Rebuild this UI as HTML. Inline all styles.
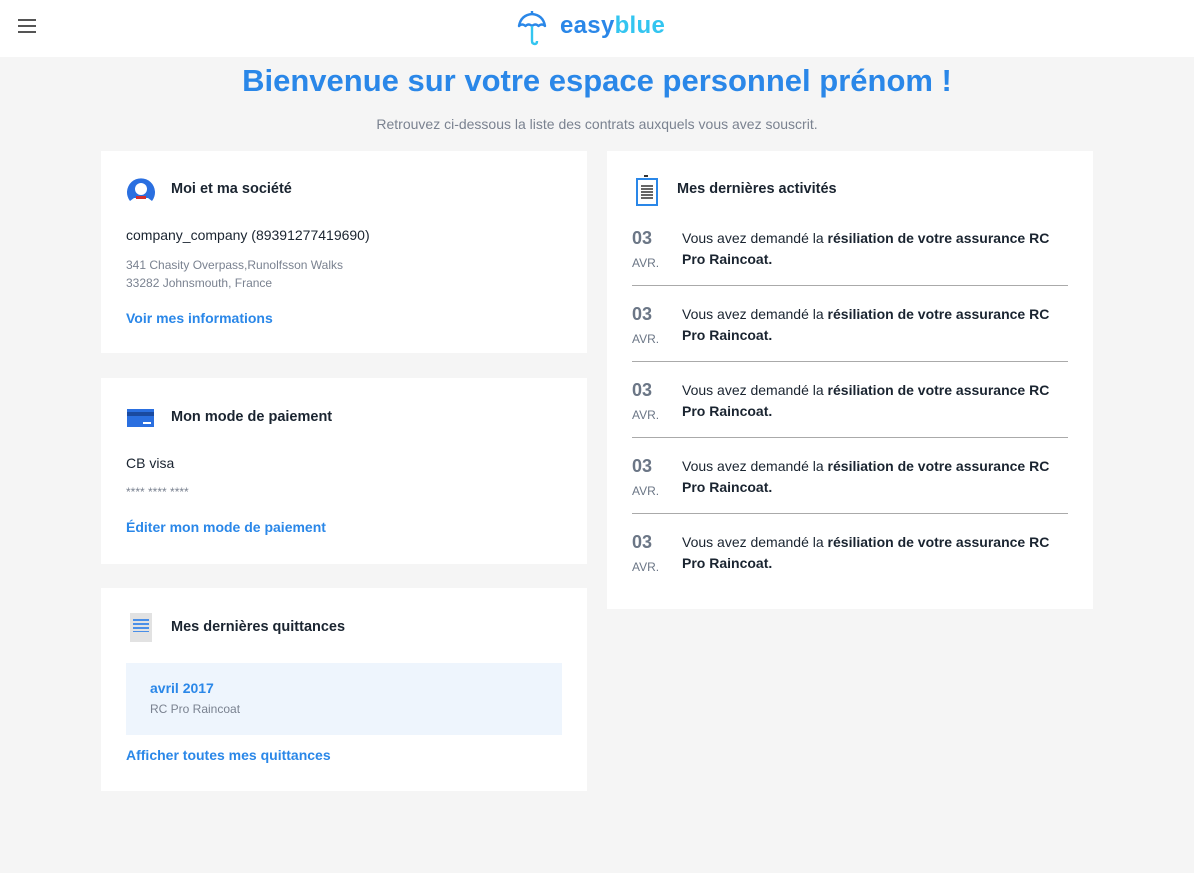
<!DOCTYPE html>
<html><head><meta charset="utf-8"><style>
*{box-sizing:border-box;margin:0;padding:0}
body{width:1194px;height:873px;background:#f5f5f5;font-family:"Liberation Sans",sans-serif;color:#1a2430;position:relative;overflow:hidden}
.top{position:absolute;left:0;top:0;width:1194px;height:57px;background:#fff}
.burger{position:absolute;left:18px;top:19px;width:18px}
.burger i{display:block;height:2px;background:#555;margin-bottom:4px}
.logo{position:absolute;left:517px;top:10px}
.logotxt{position:absolute;left:560px;top:12px;font-size:24px;font-weight:bold;letter-spacing:0.3px}
h1{position:absolute;left:0;width:1194px;top:63px;text-align:center;font-size:31px;color:#2a87e8;font-weight:bold}
.sub{position:absolute;left:0;width:1194px;top:116px;text-align:center;font-size:14px;color:#7a8290}
.card{position:absolute;background:#fff}
.t{position:absolute;left:70px;font-size:14.5px;font-weight:bold;color:#1a2430}
.p{position:absolute;left:25px;font-size:14px}
.s{position:absolute;left:25px;font-size:12px;color:#7a8290;line-height:18px}
.l{position:absolute;left:25px;font-size:14px;color:#2a87e8;font-weight:bold}
.act{position:absolute;left:25px;width:436px}
.act .d{position:absolute;left:0;top:-7px;font-size:18px;color:#6b7686;font-weight:bold}
.act .m{position:absolute;left:0;top:21px;font-size:12px;color:#6b7686}
.act .x{position:absolute;left:50px;top:-7px;font-size:14px;line-height:21px;width:380px}
.hr{position:absolute;left:25px;width:436px;border-top:1px solid #aaa}
</style></head><body>
<div class="top">
<div class="burger"><i></i><i></i><i></i></div>
<svg class="logo" width="32" height="36" viewBox="0 0 32 36"><path d="M2 16 Q4 5 15 4 Q26 5 28 16 Q25 13 21.5 16 Q18.5 13 15 16 Q11.5 13 8.5 16 Q5 13 2 16Z" fill="none" stroke="#2a87e8" stroke-width="2.4" stroke-linejoin="round"/><path d="M15 4V1" stroke="#2a87e8" stroke-width="2.4"/><path d="M15 16V31 Q15 34 18 34 Q20 34 20 31" fill="none" stroke="#33c5f0" stroke-width="2.4"/></svg>
<div class="logotxt"><span style="color:#2a87e8">easy</span><span style="color:#33c5f0">blue</span></div>
</div>
<h1>Bienvenue sur votre espace personnel prénom !</h1>
<div class="sub">Retrouvez ci-dessous la liste des contrats auxquels vous avez souscrit.</div>

<div class="card" style="left:101px;top:151px;width:486px;height:202px">
<svg style="position:absolute;left:25px;top:25px" width="30" height="28" viewBox="0 0 30 28"><path d="M4 25 A14 14 0 1 1 26 25 L22 22 L8 22Z" fill="#2a6fe0"/><circle cx="15" cy="13" r="6" fill="#fff"/><path d="M8 25 Q15 19 22 25" fill="#fff"/><rect x="10" y="20" width="10" height="3" fill="#d32f2f"/></svg>
<div class="t" style="top:30px">Moi et ma société</div>
<div class="p" style="top:76px">company_company (89391277419690)</div>
<div class="s" style="top:105px">341 Chasity Overpass,Runolfsson Walks<br>33282 Johnsmouth, France</div>
<div class="l" style="top:159px">Voir mes informations</div>
</div>

<div class="card" style="left:101px;top:378px;width:486px;height:186px">
<div style="position:absolute;left:26px;top:31px;width:27px;height:18px;background:#2a6fe0"><div style="height:4px;margin-top:3px;background:#1a4aa0"></div><div style="position:absolute;right:3px;bottom:3px;width:8px;height:2px;background:#fff"></div></div>
<div class="t" style="top:31px">Mon mode de paiement</div>
<div class="p" style="top:77px">CB visa</div>
<div class="s" style="top:105px">**** **** ****</div>
<div class="l" style="top:141px">Éditer mon mode de paiement</div>
</div>

<div class="card" style="left:101px;top:588px;width:486px;height:203px">
<div style="position:absolute;left:29px;top:25px;width:22px;height:29px;background:#e2e2e2"><div style="margin:6px 3px;height:13px;background:repeating-linear-gradient(#4a8fe8 0 2px,transparent 2px 4px)"></div></div>
<div class="t" style="top:31px">Mes dernières quittances</div>
<div style="position:absolute;left:25px;top:75px;width:436px;height:72px;background:#eef5fd">
<div style="position:absolute;left:24px;top:17px;font-size:14px;font-weight:bold;color:#2a87e8">avril 2017</div>
<div style="position:absolute;left:24px;top:39px;font-size:12px;color:#7a8290">RC Pro Raincoat</div></div>
<div class="l" style="top:159px">Afficher toutes mes quittances</div>
</div>

<div class="card" style="left:607px;top:151px;width:486px;height:458px">
<svg style="position:absolute;left:28px;top:22px" width="24" height="34" viewBox="0 0 24 34"><rect x="9" y="2" width="4" height="2" fill="#333"/><rect x="2" y="6" width="20" height="26" fill="#fff" stroke="#2a87e8" stroke-width="2"/><path d="M6 13h12M6 16h12M6 19h12M6 22h12M6 25h12" stroke="#333" stroke-width="1.5"/></svg>
<div class="t" style="top:30px">Mes dernières activités</div>
<div class="hr" style="top:134px"></div>
<div class="hr" style="top:210px"></div>
<div class="hr" style="top:286px"></div>
<div class="hr" style="top:362px"></div>
<div class="act" style="top:84px"><div class="d">03</div><div class="m">AVR.</div><div class="x">Vous avez demandé la <b>résiliation de votre assurance RC Pro Raincoat.</b></div></div>
<div class="act" style="top:160px"><div class="d">03</div><div class="m">AVR.</div><div class="x">Vous avez demandé la <b>résiliation de votre assurance RC Pro Raincoat.</b></div></div>
<div class="act" style="top:236px"><div class="d">03</div><div class="m">AVR.</div><div class="x">Vous avez demandé la <b>résiliation de votre assurance RC Pro Raincoat.</b></div></div>
<div class="act" style="top:312px"><div class="d">03</div><div class="m">AVR.</div><div class="x">Vous avez demandé la <b>résiliation de votre assurance RC Pro Raincoat.</b></div></div>
<div class="act" style="top:388px"><div class="d">03</div><div class="m">AVR.</div><div class="x">Vous avez demandé la <b>résiliation de votre assurance RC Pro Raincoat.</b></div></div>
</div>
</body></html>
